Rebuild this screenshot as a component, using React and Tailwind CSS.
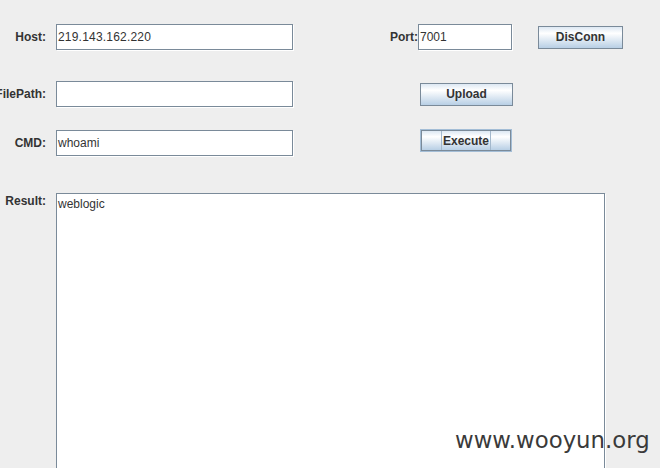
import React from "react";

const font = { fontFamily: '"Liberation Sans", Arial, sans-serif' };

function Label({ children, className = "" }) {
  return (
    <div className={"w-[46px] shrink-0 flex justify-end whitespace-nowrap font-bold text-[12px] leading-[14px] text-[#333333] " + className}>
      {children}
    </div>
  );
}

function Field({ value, className = "" }) {
  return (
    <div className={"shrink-0 bg-white border border-[#7a8a99] shadow-[1px_1px_0_#ffffff] pl-[1px] text-[12px] leading-[14px] text-[#333333] flex items-center whitespace-nowrap " + className}>
      {value}
    </div>
  );
}

function Btn({ children, className = "" }) {
  return (
    <div className={"shrink-0 border border-[#7a8a99] bg-[linear-gradient(to_bottom,#dde8f3_0%,#ffffff_30%,#b8cfe5_100%)] flex items-center justify-center font-bold text-[12px] leading-[14px] text-[#333333] " + className}>
      {children}
    </div>
  );
}

export default function App() {
  return (
    <div className="relative w-[660px] h-[468px] overflow-hidden bg-[#eeeeee]" style={font}>
      {/* Row 1 */}
      <div className="flex items-center mt-[24px] h-[26px]">
        <Label>Host:</Label>
        <Field value="219.143.162.220" className="ml-[10px] w-[237px] h-[26px] tracking-[0.2px]" />
        <div className="ml-[97px] font-bold text-[12px] leading-[14px] text-[#333333] whitespace-nowrap">Port:</div>
        <Field value="7001" className="w-[94px] h-[26px]" />
        <Btn className="ml-[26px] w-[85px] h-[23px]">DisConn</Btn>
      </div>

      {/* Row 2 */}
      <div className="flex items-center mt-[31px] h-[26px]">
        <Label>FilePath:</Label>
        <Field value="" className="ml-[10px] w-[237px] h-[26px]" />
        <Btn className="ml-[127px] w-[93px] h-[23px]">Upload</Btn>
      </div>

      {/* Row 3 */}
      <div className="flex items-center mt-[23px] h-[26px]">
        <Label>CMD:</Label>
        <Field value="whoami" className="ml-[10px] w-[237px] h-[26px]" />
        <div className="ml-[127px] self-start -mt-px w-[92px] h-[23px] border border-[#a3bdd6] shrink-0">
          <div className="w-full h-full border border-[#7a8a99] bg-[linear-gradient(to_bottom,#dde8f3_0%,#ffffff_30%,#b8cfe5_100%)] flex justify-center">
            <div className="h-full px-[1px] border-x border-[#a3b8cc] flex items-center font-bold text-[12px] leading-[14px] text-[#333333]">
              Execute
            </div>
          </div>
        </div>
      </div>

      {/* Result */}
      <div className="flex items-start mt-[37px]">
        <Label className="mt-px">Result:</Label>
        <div className="ml-[10px] w-[549px] h-[300px] bg-white border border-[#7a8a99] shadow-[1px_1px_0_#ffffff] pl-[1px] pt-[3px] text-[12px] leading-[14px] text-[#333333]">
          weblogic
        </div>
      </div>

      {/* watermark */}
      <div
        className="absolute left-[455px] top-[425px] text-[22.8px] leading-[30px] text-[#3a3a3a] whitespace-nowrap"
        style={{ fontFamily: '"DejaVu Sans", "Noto Sans", sans-serif' }}
      >
        www.wooyun.org
      </div>
    </div>
  );
}
